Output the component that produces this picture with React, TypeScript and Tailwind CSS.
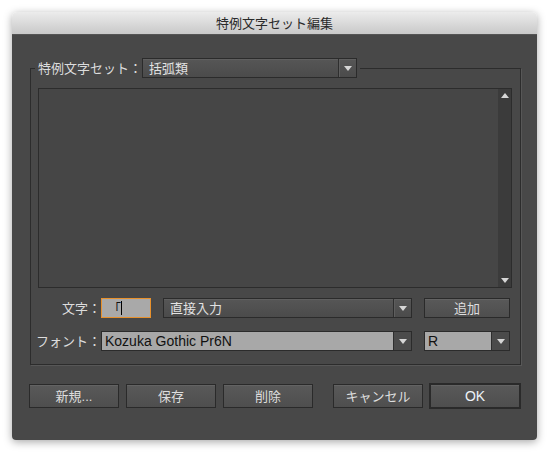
import React from "react";

function Arrow({ up = false }: { up?: boolean }) {
  return (
    <svg width="8" height="5" viewBox="0 0 8 5" className={up ? "rotate-180" : ""}>
      <path d="M0 0 H8 L4 5 Z" fill="#d6d6d6" />
    </svg>
  );
}

function ArrowBox({ light = false }: { light?: boolean }) {
  return (
    <div
      className={
        "flex h-full w-[18px] items-center justify-center border-l border-[#2e2e2e] " +
        (light ? "bg-[#4b4b4b]" : "shadow-[inset_1px_0_0_#5e5e5e]")
      }
    >
      <Arrow />
    </div>
  );
}

function DarkSelect({ text, className = "" }: { text: string; className?: string }) {
  return (
    <div
      className={
        "flex h-[20px] items-center border border-[#2b2b2b] bg-gradient-to-b from-[#565656] to-[#4b4b4b] shadow-[inset_0_1px_0_#5f5f5f] " +
        className
      }
    >
      <span className="flex-1 truncate pl-[6px] text-[13px] leading-none text-[#e2e2e2]">{text}</span>
      <ArrowBox />
    </div>
  );
}

function LightSelect({ text, className = "" }: { text: string; className?: string }) {
  return (
    <div className={"flex h-[20px] items-center border border-[#2b2b2b] bg-[#a8a8a8] " + className}>
      <span className="flex-1 truncate pl-[3px] text-[14px] leading-none text-[#111]">{text}</span>
      <ArrowBox light />
    </div>
  );
}

function Btn({
  children,
  size = "h-[24px] w-[90px] border",
  className = "",
}: {
  children: React.ReactNode;
  size?: string;
  className?: string;
}) {
  return (
    <button
      className={
        "flex items-center justify-center border-[#2a2a2a] bg-gradient-to-b from-[#595959] to-[#4e4e4e] leading-none shadow-[inset_0_1px_0_#636363] " +
        size +
        " " +
        className
      }
    >
      {children}
    </button>
  );
}

function Label({ children }: { children: React.ReactNode }) {
  return (
    <span className="flex w-[63px] justify-end whitespace-nowrap text-[13px] leading-none text-[#dcdcdc]">
      {children}
    </span>
  );
}

export default function App() {
  return (
    <div className="h-[452px] w-[549px] bg-white pl-[12px] pt-[12px] font-['Liberation_Sans','Noto_Sans_CJK_JP',sans-serif]">
      <div className="flex h-[428px] w-[525px] flex-col overflow-hidden rounded-t-[5px] rounded-b-[4px] shadow-[0_2px_8px_rgba(0,0,0,0.35)]">
        {/* title bar */}
        <div className="flex h-[23px] items-center justify-center border-b border-[#555] bg-gradient-to-b from-[#ececec] to-[#c9c9c9] text-[13px] leading-none text-[#2a2a2a]">
          特例文字セット編集
        </div>

        {/* body */}
        <div className="flex flex-1 flex-col bg-[#484848] pt-[23px]">
          <fieldset className="ml-[18px] w-[491px] border border-[#2c2c2c] px-[7px] pb-[13px] shadow-[1px_1px_0_#575757]">
            <legend className="-ml-[3px] flex items-center pl-[3px] pr-[3px]">
              <span className="whitespace-nowrap text-[13px] leading-none text-[#dcdcdc]">特例文字セット：</span>
              <DarkSelect text="括弧類" className="w-[215px]" />
            </legend>

            {/* list */}
            <div className="mt-[10px] flex h-[200px] w-[474px] border border-[#2c2c2c] bg-[#464646]">
              <div className="flex-1" />
              <div className="flex w-[13px] flex-col items-center justify-between bg-[#3b3b3b] py-[4px]">
                <Arrow up />
                <Arrow />
              </div>
            </div>

            {/* row 1 */}
            <div className="mt-[10px] flex h-[20px] items-center">
              <Label>文字：</Label>
              <div className="flex h-[20px] w-[50px] items-center border border-[#e8912c] bg-[#a9a9a9] pl-[6px] text-[13px] leading-none text-[#111]">
                <span>「</span>
                <span className="h-[14px] w-px bg-black" />
              </div>
              <DarkSelect text="直接入力" className="ml-[12px] w-[249px]" />
              <Btn size="h-[20px] w-[86px] border" className="ml-[12px] text-[13px] text-[#dedede]">
                追加
              </Btn>
            </div>

            {/* row 2 */}
            <div className="mt-[13px] flex h-[20px] items-center">
              <Label>フォント：</Label>
              <LightSelect text="Kozuka Gothic Pr6N" className="w-[311px]" />
              <LightSelect text="R" className="ml-[12px] w-[86px]" />
            </div>
          </fieldset>

          {/* buttons */}
          <div className="ml-[17px] mt-[18px] flex items-center">
            <Btn className="text-[13px] text-[#dedede]">新規...</Btn>
            <Btn className="ml-[7px] text-[13px] text-[#dedede]">保存</Btn>
            <Btn className="ml-[7px] text-[13px] text-[#dedede]">削除</Btn>
            <Btn className="ml-[20px] text-[13px] text-[#dedede]">キャンセル</Btn>
            <Btn size="h-[26px] w-[92px] border-2" className="ml-[6px] border-[#1f1f1f] text-[14px] text-[#eef3f8]">
              OK
            </Btn>
          </div>
        </div>
      </div>
    </div>
  );
}
